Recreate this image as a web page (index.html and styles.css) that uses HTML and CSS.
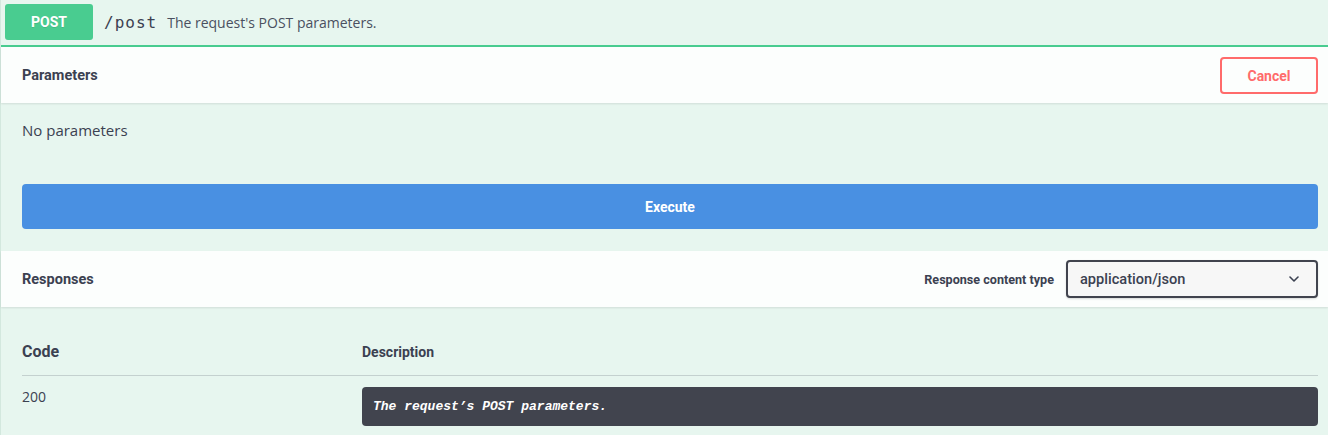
FILE: index.html
```html
<!DOCTYPE html>
<html>
<head>
<meta charset="utf-8">
<link rel="stylesheet" href="styles.css">
</head>
<body>
<div class="opblock">
  <div class="summary">
    <span class="method">POST</span>
    <span class="path">/post</span>
    <span class="summary-desc">The request's POST parameters.</span>
  </div>

  <div class="section-header">
    <h4 class="section-title">Parameters</h4>
    <button class="btn-cancel">Cancel</button>
  </div>
  <div class="params-body">
    <p class="no-params">No parameters</p>
    <button class="btn-execute">Execute</button>
  </div>

  <div class="section-header">
    <h4 class="section-title">Responses</h4>
    <div class="content-type">
      <span class="content-type-label">Response content type</span>
      <div class="select">
        <span>application/json</span>
        <svg class="chevron" width="10" height="6" viewBox="0 0 10 6"><path d="M1 1 L5 5 L9 1" fill="none" stroke="#3b4151" stroke-width="1.6" stroke-linecap="round" stroke-linejoin="round"/></svg>
      </div>
    </div>
  </div>

  <div class="responses">
    <div class="resp-head">
      <div class="col-code head-code">Code</div>
      <div class="col-desc head-desc">Description</div>
    </div>
    <div class="resp-row">
      <div class="col-code code-val">200</div>
      <div class="col-desc">
        <pre class="desc-block">The request’s POST parameters.</pre>
      </div>
    </div>
  </div>
</div>
</body>
</html>
```

FILE: styles.css
```css
html, body {
  margin: 0;
  padding: 0;
  background: #e7f6ef;
  overflow: hidden;
}

.opblock {
  width: 1328px;
  height: 435px;
  background: #e7f6ef;
  color: #3b4151;
  font-family: Roboto, "Open Sans", sans-serif;
  box-sizing: border-box;
  border-left: 1px solid #d3e8de;
}

.summary {
  display: flex;
  align-items: center;
  padding: 4px 5px 5px 4px;
  height: 36px;
  border-bottom: 2px solid #49cc90;
}

.method {
  width: 88px;
  height: 36px;
  border-radius: 3px;
  background: #49cc90;
  color: #fff;
  font-family: Roboto, sans-serif;
  font-weight: 700;
  font-size: 14px;
  display: flex;
  align-items: center;
  justify-content: center;
  text-shadow: 0 1px 0 rgba(0,0,0,.1);
}

.path {
  margin-left: 11px;
  font-family: "DejaVu Sans Mono", "Liberation Mono", monospace;
  font-weight: 400;
  font-size: 16px;
  letter-spacing: 1px;
  color: #3b4151;
}

.summary-desc {
  margin-left: 10px;
  font-family: "Open Sans", sans-serif;
  font-size: 14px;
  color: #4a5060;
}

.section-header {
  display: flex;
  align-items: center;
  justify-content: space-between;
  height: 56px;
  box-sizing: border-box;
  padding: 0 10px 0 21px;
  background: rgba(255,255,255,.85);
  box-shadow: 0 1px 2px rgba(0,0,0,.1);
}

.section-title {
  margin: 0;
  font-family: Roboto, sans-serif;
  font-weight: 700;
  font-size: 14.5px;
  color: #3b4151;
}

.btn-cancel {
  width: 98px;
  height: 37px;
  margin-top: 1px;
  border: 2px solid #ff6b6b;
  border-radius: 4px;
  background: transparent;
  color: #ff6b6b;
  font-family: Roboto, sans-serif;
  font-weight: 700;
  font-size: 14px;
  padding: 0;
}

.params-body {
  padding: 17px 10px 22px 21px;
}

.no-params {
  margin: 0;
  font-family: "Open Sans", sans-serif;
  font-size: 15px;
  line-height: 20px;
  color: #3b4151;
}

.btn-execute {
  display: block;
  width: 100%;
  height: 45px;
  margin-top: 44px;
  border: none;
  border-radius: 4px;
  background: #4990e2;
  color: #fff;
  font-family: Roboto, sans-serif;
  font-weight: 700;
  font-size: 14px;
  padding: 0;
}

.content-type {
  display: flex;
  align-items: center;
}

.content-type-label {
  font-family: Roboto, sans-serif;
  font-weight: 700;
  font-size: 12.6px;
  color: #3b4151;
  margin-right: 12px;
}

.select {
  width: 252px;
  height: 38px;
  box-sizing: border-box;
  border: 2px solid #41444e;
  border-radius: 4px;
  display: flex;
  align-items: center;
  justify-content: space-between;
  padding: 0 17px 0 12px;
  font-family: Roboto, sans-serif;
  font-weight: 500;
  font-size: 14.6px;
  color: #3b4151;
  background: #f7f7f7;
  box-shadow: 0 1px 2px rgba(0,0,0,.15);
}

.responses {
  padding: 34px 10px 0 21px;
}

.resp-head {
  display: flex;
  align-items: flex-start;
  height: 34px;
  line-height: 22px;
  border-bottom: 1px solid rgba(59,65,81,.2);
}

.col-code {
  width: 340px;
  flex: none;
}

.col-desc {
  flex: 1;
}

.head-code {
  font-family: Roboto, sans-serif;
  font-weight: 700;
  font-size: 16px;
}

.head-desc {
  font-family: Roboto, sans-serif;
  font-weight: 700;
  font-size: 14px;
}

.resp-row {
  display: flex;
  align-items: flex-start;
  padding-top: 11px;
}

.code-val {
  font-family: "Open Sans", sans-serif;
  font-size: 14px;
  line-height: 20px;
  color: #3b4151;
}

.desc-block {
  margin: 0;
  height: 39px;
  box-sizing: border-box;
  padding: 10px 11px;
  border-radius: 4px;
  background: #41444e;
  color: #fff;
  font-family: "Liberation Mono", "DejaVu Sans Mono", monospace;
  font-style: italic;
  font-weight: 700;
  font-size: 13px;
  line-height: 19px;
}
```
